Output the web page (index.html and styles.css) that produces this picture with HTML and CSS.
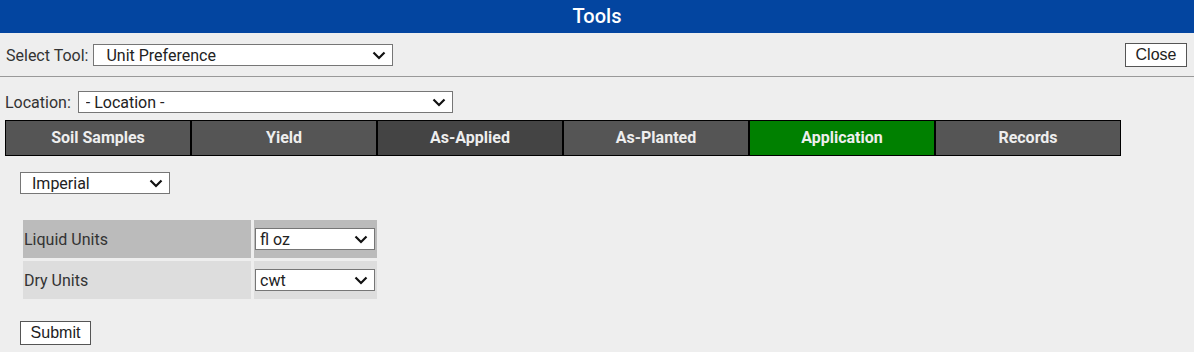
FILE: index.html
```html
<!DOCTYPE html>
<html lang="en">
<head>
    <meta charset="UTF-8">
    <meta name="viewport" content="width=device-width, initial-scale=1.0">
    <title>Tools</title>
    <link rel="stylesheet" href="styles.css">
</head>
<body>
    <header class="title-bar">Tools</header>

    <div class="tool-row">
        <label for="toolSelect">Select Tool:</label>
        <select id="toolSelect" class="tool-select">
            <option>Unit Preference</option>
        </select>
        <button class="close-btn">Close</button>
    </div>

    <hr class="divider">

    <div class="location-row">
        <label for="locationSelect">Location:</label>
        <select id="locationSelect" class="location-select">
            <option>- Location -</option>
        </select>
    </div>

    <nav class="tabs">
        <div class="tab">Soil Samples</div>
        <div class="tab">Yield</div>
        <div class="tab tab-dark">As-Applied</div>
        <div class="tab">As-Planted</div>
        <div class="tab tab-active">Application</div>
        <div class="tab">Records</div>
    </nav>

    <div class="pref-panel">
        <select class="system-select">
            <option>Imperial</option>
        </select>

        <table class="unit-table">
            <tr class="row-liquid">
                <td class="unit-label">Liquid Units</td>
                <td class="unit-value">
                    <select class="unit-select"><option>fl oz</option></select>
                </td>
            </tr>
            <tr class="row-dry">
                <td class="unit-label">Dry Units</td>
                <td class="unit-value">
                    <select class="unit-select"><option>cwt</option></select>
                </td>
            </tr>
        </table>

        <button class="submit-btn">Submit</button>
    </div>
</body>
</html>
```

FILE: styles.css
```css
* {
    margin: 0;
    padding: 0;
    box-sizing: border-box;
}

body {
    font-family: 'Roboto', 'Liberation Sans', sans-serif;
    font-size: 16px;
    background-color: #eeeeee;
    color: #333;
}

.title-bar {
    height: 33px;
    line-height: 33px;
    background: #0345a0;
    color: #fff;
    text-align: center;
    font-size: 20px;
    font-weight: 500;
}

/* flat select with a chevron, like the browser's own */
select {
    appearance: none;
    -webkit-appearance: none;
    height: 22px;
    font-family: 'Roboto', 'Liberation Sans', sans-serif;
    font-size: 16px;
    color: #222;
    background-color: #fff;
    background-image: url("data:image/svg+xml,%3Csvg xmlns='http://www.w3.org/2000/svg' width='14' height='9' viewBox='0 0 14 9'%3E%3Cpath d='M1.5 1.5 L7 7 L12.5 1.5' fill='none' stroke='%23111' stroke-width='2.2'/%3E%3C/svg%3E");
    background-repeat: no-repeat;
    background-position: right 6px center;
    background-size: 14px 9px;
    border: 1px solid #767676;
    border-radius: 0;
    padding: 0 26px 0 4px;
}

button {
    height: 24px;
    font-family: 'Liberation Sans', Arial, sans-serif;
    font-size: 16px;
    color: #222;
    background: #fff;
    border: 1px solid #555;
    cursor: pointer;
}

.tool-row {
    display: flex;
    align-items: center;
    height: 24px;
    margin-top: 10px;
    padding: 0 7px 0 6px;
}

.tool-row label {
    margin-right: 5px;
}

.tool-select {
    width: 300px;
    padding-left: 12px;
}

.close-btn {
    margin-left: auto;
    width: 62px;
}

.divider {
    border: none;
    border-top: 1px solid #999;
    margin-top: 9px;
}

.location-row {
    display: flex;
    align-items: center;
    height: 22px;
    margin-top: 14px;
    padding-left: 5px;
}

.location-row label {
    margin-right: 7px;
}

.location-select {
    width: 375px;
    padding-left: 7px;
}

.tabs {
    display: flex;
    margin: 7px 0 0 5px;
}

.tab {
    width: 186px;
    height: 36px;
    line-height: 34px;
    background: #555555;
    border: 1px solid #000;
    color: #eeeeee;
    text-align: center;
    font-weight: 700;
    font-size: 16px;
}

.tab-dark {
    background: #444444;
}

.tab-active {
    background: #008000;
}

.pref-panel {
    padding-left: 20px;
}

.system-select {
    display: block;
    width: 150px;
    margin-top: 16px;
    padding-left: 11px;
}

.unit-table {
    margin-top: 23px;
    border-spacing: 3px;
}

.unit-table td {
    height: 38px;
    padding: 0 1px;
}

.unit-label {
    width: 228px;
}

.unit-value {
    width: 123px;
}

.row-liquid td {
    background: #bbbbbb;
}

.row-dry td {
    background: #dddddd;
}

.unit-select {
    display: block;
    width: 120px;
}

.submit-btn {
    display: block;
    width: 71px;
    margin-top: 19px;
}
```
